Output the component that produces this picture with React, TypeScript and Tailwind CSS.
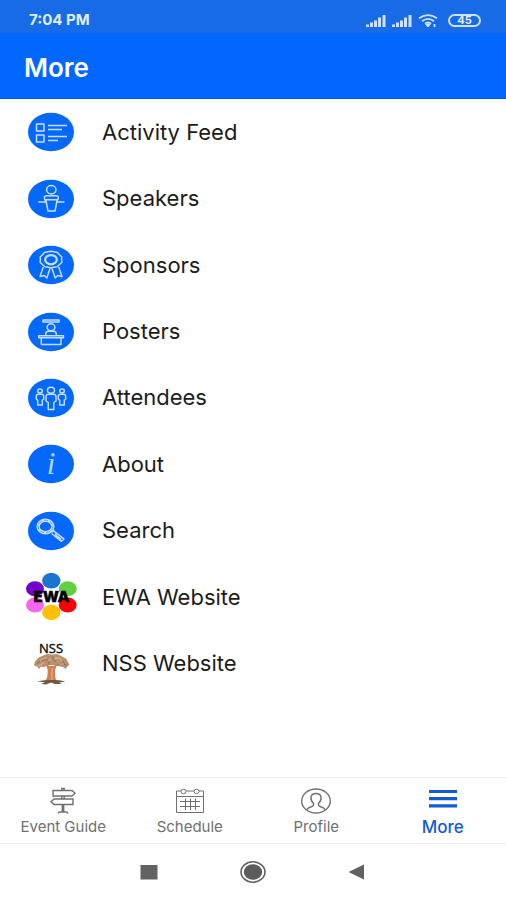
import React, { useState } from 'react';

interface MenuItem {
  id: string;
  label: string;
  icon: React.ReactNode;
}

interface Tab {
  id: string;
  label: string;
  icon: React.ReactNode;
}

const RoundIcon: React.FC<{ children: React.ReactNode }> = ({ children }) => (
  <svg viewBox="0 0 52 48" className="w-[52px] h-12 shrink-0" aria-hidden="true">
    <ellipse cx="26" cy="24" rx="23" ry="19.3" fill="#0468fb" />
    <g fill="none" stroke="#c6deff" strokeWidth="1.5" strokeLinejoin="round">
      {children}
    </g>
  </svg>
);

const ActivityIcon = () => (
  <RoundIcon>
    <rect x="11.5" y="16" width="7.5" height="7" />
    <rect x="11.5" y="27" width="7.5" height="7" />
    <path d="M23 17.5H42M23 21.5H37M23 28.5H42M23 32.5H33" />
  </RoundIcon>
);

const SpeakersIcon = () => (
  <RoundIcon>
    <ellipse cx="26.3" cy="14.7" rx="4.7" ry="4.2" />
    <path d="M20.5 26.5L19.3 22.5Q19.3 20.7 22 20.7H31Q33.4 20.7 33.4 22.5L32.2 26.5" />
    <path d="M13.3 27H21.2M31.8 27H39.5" />
    <path d="M20.8 24.8H32.2L30 36H23Z" />
  </RoundIcon>
);

const SponsorsIcon = () => (
  <RoundIcon>
    <path d="M26 10.2l3 .6 3.5 .7 2 2.2 2.3 2.3-.2 2.9.3 2.4-2.6 2.4-2.3 2-3.2.6-2.8.7-2.8-.7-3.2-.6-2.3-2-2.6-2.4.3-2.4-.2-2.9 2.3-2.3 2-2.2 3.500-.7z" />
    <ellipse cx="26" cy="18.7" rx="5.8" ry="4.6" strokeWidth="2.2" />
    <path d="M18.3 26L15 35.500l4.300-1 2.500 2.500L25 27.500M33.700 26L37 35.500l-4.300-1-2.500 2.500L27 27.500" />
  </RoundIcon>
);

const PostersIcon = () => (
  <RoundIcon>
    <rect x="18" y="12" width="16" height="2" />
    <ellipse cx="26" cy="19.3" rx="3.9" ry="3.5" />
    <path d="M20.8 27.7V25.5Q21 23.3 23.5 23.3H28.5Q31 23.3 31.2 25.5V27.7" />
    <rect x="13.7" y="27.8" width="24.8" height="2" />
    <path d="M16.3 29.8V36.5H36V29.8" />
  </RoundIcon>
);

const AttendeesIcon = () => (
  <RoundIcon>
    <ellipse cx="26" cy="16.3" rx="3.5" ry="3" />
    <path d="M24 20.3H28Q31 20.3 31 22.5V27L28.8 28.5V35.5H23.2V28.5L21 27V22.5Q21 20.3 24 20.3Z" />
    <ellipse cx="15" cy="17" rx="2.3" ry="1.9" />
    <path d="M13.5 20.3H16.5Q18.7 20.3 18.7 22.5V25L17.3 26.2V31H12.7V26.2L11.3 25V22.5Q11.3 20.3 13.5 20.3Z" />
    <ellipse cx="37" cy="17" rx="2.3" ry="1.9" />
    <path d="M35.5 20.3H38.5Q40.7 20.3 40.7 22.5V25L39.3 26.2V31H34.7V26.2L33.3 25V22.5Q33.3 20.3 35.5 20.3Z" />
  </RoundIcon>
);

const AboutIcon = () => (
  <RoundIcon>
    <text x="26" y="34" textAnchor="middle" fontSize="31" fontStyle="italic" fontFamily="Liberation Serif, serif" fill="#b5d3ff" stroke="none">
      i
    </text>
  </RoundIcon>
);

const SearchIcon = () => (
  <RoundIcon>
    <ellipse cx="20.5" cy="19.5" rx="7.4" ry="6.2" strokeWidth="3.4" />
    <ellipse cx="20.5" cy="19.5" rx="7.4" ry="6.2" stroke="#5a9dff" strokeWidth="1" strokeDasharray="4 2" />
    <path d="M27 25.2l1.6-1.4L39 32l-2.6 2.3L26.500 26.500M30 27.500l1.500-1.400M30.500 28l5.800 4.200" />
  </RoundIcon>
);

const EwaLogo = () => (
  <svg viewBox="0 0 52 48" className="w-[52px] h-12 shrink-0" aria-hidden="true">
    <ellipse cx="26.3" cy="7.7" rx="9.2" ry="7.8" fill="#1975cf" />
    <ellipse cx="42.7" cy="15.7" rx="9" ry="7.5" fill="#62ce42" />
    <ellipse cx="42.7" cy="32" rx="9" ry="7.5" fill="#fb0207" />
    <ellipse cx="26.3" cy="39.4" rx="9.2" ry="7.7" fill="#fdc006" />
    <ellipse cx="10" cy="32" rx="9" ry="7.5" fill="#f765f4" />
    <ellipse cx="10" cy="15.7" rx="9" ry="7.5" fill="#7202c9" />
    <text x="26.5" y="29" textAnchor="middle" fontSize="15" fontWeight="900" fontFamily="Inter, sans-serif" fill="#000" stroke="#000" strokeWidth="0.3">
      EWA
    </text>
  </svg>
);

const NssLogo = () => (
  <svg viewBox="0 0 52 48" className="w-[52px] h-12 shrink-0" aria-hidden="true">
    <text x="26" y="12.5" textAnchor="middle" fontSize="13" fontFamily="Open Sans, sans-serif" fill="#111" stroke="#111" strokeWidth="0.4">
      NSS
    </text>
    <path d="M21 26Q19 28 16 26.500L14 29L12 26.500L9 25.500L10 21.500L13 18L17 16L22 14L27 14.500L32 14L37 16.500L41 18.500L43 22L44.500 25L42 26.500L41 29L38 27L33 26L29 25H24Z" fill="#b8906f" />
    <path d="M12 24Q15 19 20 20M18 17Q24 20 25 25M28 16Q27 20 31 22M34 18Q38 20 40 25M33 25Q37 22 42 26" fill="none" stroke="#8c6f58" strokeWidth="1" />
    <path d="M15 21Q18 17 22 18M29 19Q34 16 37 21M23 21L26 19M34 24L39 24M13 26L19 23" fill="none" stroke="#dfae86" strokeWidth="1.2" />
    <path d="M19 23Q22.500 25 25 26L28 26Q31 25 34 23Q30 27 30 32Q29.800 38 31.500 41H20.500Q23 37 22.700 32Q23 27 19 23Z" fill="#d07f4e" />
    <path d="M27 28V40" stroke="#e7ad82" strokeWidth="1.4" />
    <path d="M12 41.500Q18 40 22 40H31Q36 40 40.500 41.500L34 42.500L37 44H30L26 42.500L21 44.500L16 44L20 42.300Z" fill="#745743" />
  </svg>
);

const menuItems: MenuItem[] = [
  { id: 'activity', label: 'Activity Feed', icon: <ActivityIcon /> },
  { id: 'speakers', label: 'Speakers', icon: <SpeakersIcon /> },
  { id: 'sponsors', label: 'Sponsors', icon: <SponsorsIcon /> },
  { id: 'posters', label: 'Posters', icon: <PostersIcon /> },
  { id: 'attendees', label: 'Attendees', icon: <AttendeesIcon /> },
  { id: 'about', label: 'About', icon: <AboutIcon /> },
  { id: 'search', label: 'Search', icon: <SearchIcon /> },
  { id: 'ewa', label: 'EWA Website', icon: <EwaLogo /> },
  { id: 'nss', label: 'NSS Website', icon: <NssLogo /> },
];

const tabs: Tab[] = [
  {
    id: 'guide',
    label: 'Event Guide',
    icon: (
      <svg viewBox="0 0 32 28" className="w-8 h-7" fill="none" stroke="currentColor" strokeWidth="1.4" aria-hidden="true">
        <path d="M6 3.5H25L28 6.2L25 9H6ZM26 12H7L4 14.7L7 17.5H26ZM14.8 3.5V1.5H17.2V3.5M14.8 9V12M17.2 9V12M15.3 17.5V25M16.7 17.5V25M11 26.5Q11.5 25 13 25H19Q20.5 25 21 26.5" />
      </svg>
    ),
  },
  {
    id: 'schedule',
    label: 'Schedule',
    icon: (
      <svg viewBox="0 0 32 28" className="w-8 h-7" fill="none" stroke="currentColor" strokeWidth="1" aria-hidden="true">
        <path d="M7 4H2.5V25.5H29.5V4H25M12 4H20M2.5 9.5H29.5" />
        <ellipse cx="9.5" cy="4.5" rx="2.5" ry="2.2" />
        <ellipse cx="22.5" cy="4.5" rx="2.5" ry="2.2" />
        <path d="M6 14.5H26M6 19.5H26M11.5 11.5V23M16.5 11.5V23M21.5 11.5V23" />
      </svg>
    ),
  },
  {
    id: 'profile',
    label: 'Profile',
    icon: (
      <svg viewBox="0 0 32 28" className="w-8 h-7" fill="none" stroke="currentColor" strokeWidth="1.4" aria-hidden="true">
        <ellipse cx="16" cy="14" rx="14.3" ry="12" />
        <path d="M6.5 23Q8 20.5 12 19.5Q14 19 13.5 16.5Q10.5 13.5 11 10Q11.5 6.5 16 6.5Q20.5 6.5 21 10Q21.5 13.5 18.5 16.5Q18 19 20 19.5Q24 20.5 25.5 23" />
      </svg>
    ),
  },
  {
    id: 'more',
    label: 'More',
    icon: (
      <svg viewBox="0 0 32 28" className="w-8 h-7" stroke="currentColor" strokeWidth="3.2" aria-hidden="true">
        <path d="M2 4.5H30M2 11.7H30M2 18.9H30" />
      </svg>
    ),
  },
];

const SignalBars = () => (
  <svg viewBox="0 0 20 13" className="w-5 h-[13px]" fill="#cfe1fb" aria-hidden="true">
    <path d="M0 10.5h3V13H0zM4 8.5h3V13H4zM8 6.5h3V13H8zM12 3.5h3V13h-3zM16.5 1h3V13h-3z" />
  </svg>
);

const StatusBar = () => (
  <div className="flex h-[33px] items-center justify-between bg-[#176be6] pt-2 pl-[29px] pr-[25px] text-[#e3eeff]">
    <span className="text-[15px] font-bold">7:04 PM</span>
    <div className="flex items-center gap-[6px]">
      <SignalBars />
      <SignalBars />
      <svg viewBox="0 0 20 13" className="w-5 h-[13px]" fill="none" stroke="#cfe1fb" strokeWidth="1.8" aria-hidden="true">
        <path d="M1 4.2Q10-2 19 4.2M4 7.2Q10 2.5 16 7.2M7 9.7Q10 7 13 9.7" />
        <path d="M8.5 10.5H11.5L10 12.5ZM16.5 10V13" />
      </svg>
      <span className="ml-1 flex h-[13px] w-[33px] items-center justify-center rounded-full border-2 border-[#cfe1fb] text-[11px] leading-none font-bold">
        45
      </span>
    </div>
  </div>
);

const App: React.FC = () => {
  const [activeTab, setActiveTab] = useState('more');

  return (
    <div className="flex min-h-screen flex-col bg-white font-[Inter,Roboto,sans-serif]">
      <StatusBar />
      <header className="flex h-[66px] items-center border-b border-[#0559d8] bg-[#0167ff] px-6 pt-1">
        <h1 className="text-[26px] font-semibold text-white">More</h1>
      </header>

      <main className="flex flex-1 flex-col pb-20">
        <ul className="flex flex-1 flex-col">
          {menuItems.map((item) => (
            <li key={item.id} className="flex flex-1">
              <a href={`#${item.id}`} className="flex flex-1 items-center gap-[25px] px-[25px] text-[22px] text-[#1c1c1c]">
                {item.icon}
                {item.label}
              </a>
            </li>
          ))}
        </ul>
      </main>

      <nav className="grid h-[67px] grid-cols-4 border-y border-[#f0f0f0]">
        {tabs.map((tab) => (
          <button
            key={tab.id}
            type="button"
            onClick={() => setActiveTab(tab.id)}
            className={`flex flex-col items-center pt-[9px] leading-6 ${activeTab === tab.id ? 'text-[#125bd0] text-[17px] font-medium' : 'text-[#707070] text-[15px]'}`}
          >
            {tab.icon}
            {tab.label}
          </button>
        ))}
      </nav>

      <div className="flex h-14 items-center justify-center gap-[78px]">
        <button type="button" aria-label="Recent apps">
          <svg viewBox="0 0 26 24" className="w-[26px] h-6" aria-hidden="true">
            <rect x="4.5" y="5" width="17" height="14.5" fill="#626262" />
          </svg>
        </button>
        <button type="button" aria-label="Home">
          <svg viewBox="0 0 26 24" className="w-[26px] h-6" aria-hidden="true">
            <ellipse cx="13" cy="12" rx="12" ry="10.2" fill="none" stroke="#626262" strokeWidth="1.6" />
            <ellipse cx="13" cy="12" rx="9.2" ry="7.8" fill="#5c5c5c" />
          </svg>
        </button>
        <button type="button" aria-label="Back">
          <svg viewBox="0 0 26 24" className="w-[26px] h-6" aria-hidden="true">
            <path d="M4.5 12L20 4.5V19.5Z" fill="#626262" />
          </svg>
        </button>
      </div>
    </div>
  );
};

export default App;
